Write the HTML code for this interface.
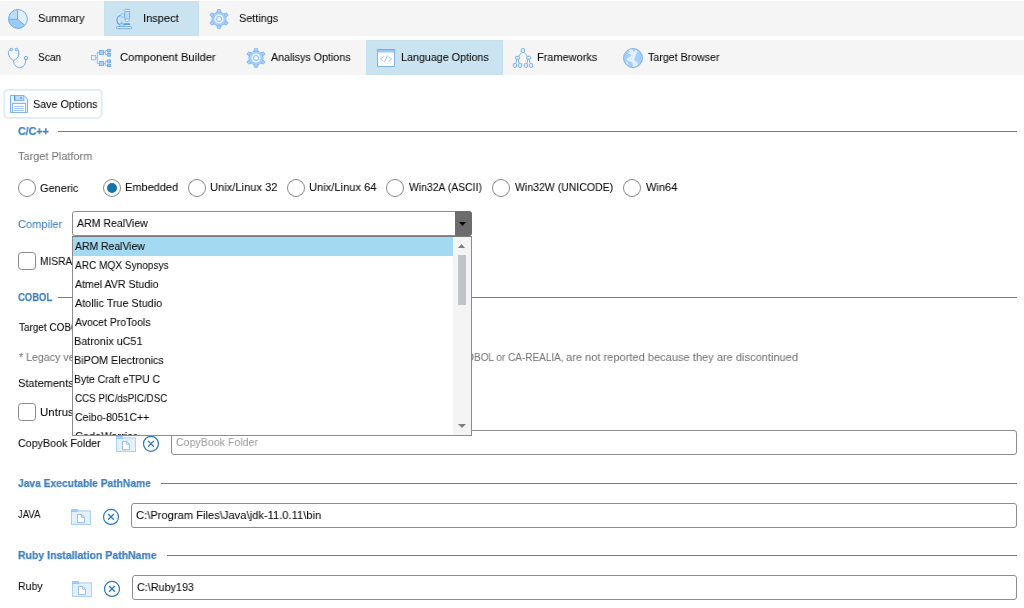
<!DOCTYPE html>
<html lang="en">
<head>
<meta charset="utf-8">
<title>Language Options</title>
<style>
html,body{margin:0;padding:0;}
body{width:1024px;height:608px;overflow:hidden;background:#fff;position:relative;font-family:"Liberation Sans",sans-serif;font-size:11.5px;color:#0a0a0a;}
.abs,.t,svg.i{position:absolute;}
.t{-webkit-text-stroke:.07px currentColor;line-height:1;white-space:nowrap;transform-origin:0 0;display:block;will-change:transform;}
.t.h{font-weight:bold;color:#3f80bd;-webkit-text-stroke:.25px #3f80bd;}
.t.b{color:#3f80bd;}
.t.g{color:#777;}
.t.p{color:#a0a0a0;}
.bar{position:absolute;left:0;width:1024px;background:#f5f5f5;}
.sel{position:absolute;background:#c9e4f0;box-shadow:inset 0 0 0 1px #c4e1ee;}
.hr{position:absolute;height:1px;background:#4a86c2;}
.radio{position:absolute;width:16px;height:16px;border:1px solid #8a8a8a;border-radius:50%;background:#fff;}
.radio.on::after{content:"";position:absolute;left:3px;top:3px;width:10px;height:10px;border-radius:50%;background:#1474a9;}
.chk{position:absolute;width:16px;height:16px;border:1px solid #8a8a8a;border-radius:3.5px;background:#fff;}
.inp{position:absolute;border:1px solid #8c8c8c;border-radius:3px;background:#fff;box-sizing:border-box;}
</style>
</head>
<body>
<!-- top toolbar -->
<div class="bar" style="top:1px;height:35px;"></div>
<div class="sel" style="left:104px;top:1px;width:95px;height:35px;"></div>
<!-- second toolbar -->
<div class="bar" style="top:40px;height:35px;"></div>
<div class="sel" style="left:366px;top:40px;width:137px;height:35px;"></div>
<!-- save button -->
<svg class="i" style="left:0;top:86px;" width="106" height="36" viewBox="0 86 106 36"><rect x="4.15" y="89.95" width="97.500" height="27.900" rx="3.800" fill="#fff" stroke="#deeaf5" stroke-width="1.700"/></svg>
<!-- section rules -->
<div class="hr" style="left:58px;top:131px;width:959px;"></div>
<div class="hr" style="left:58px;top:297px;width:959px;"></div>
<div class="hr" style="left:161px;top:483px;width:856px;"></div>
<div class="hr" style="left:167px;top:555px;width:850px;"></div>
<!-- radios -->
<div class="radio" style="left:17.5px;top:179px;"></div>
<div class="radio on" style="left:103px;top:178.5px;"></div>
<div class="radio" style="left:188px;top:178.5px;"></div>
<div class="radio" style="left:287.25px;top:178.5px;"></div>
<div class="radio" style="left:385.5px;top:178.5px;"></div>
<div class="radio" style="left:491.6px;top:178.5px;"></div>
<div class="radio" style="left:623px;top:178.5px;"></div>
<!-- checkboxes -->
<div class="chk" style="left:18px;top:252px;"></div>
<div class="chk" style="left:18px;top:403px;"></div>
<!-- inputs -->
<div class="inp" style="left:171px;top:430px;width:846px;height:25px;"></div>
<div class="inp" style="left:131px;top:503px;width:886px;height:25px;"></div>
<div class="inp" style="left:132px;top:575px;width:885px;height:25px;"></div>
<!-- combo -->
<div class="inp" style="left:72px;top:211px;width:400px;height:25px;"></div>
<div class="abs" style="left:455px;top:211px;width:17px;height:24.500px;background:#6c6c6c;border-radius:0 3.500px 3.500px 0;"></div>
<svg class="i" style="left:459px;top:222px;" width="7" height="4" viewBox="0 0 7 4"><path d="M0 0h7L3.5 4z" fill="#000"/></svg>
<!-- pie -->
<svg class="i" style="left:8px;top:9px;" width="20" height="20" viewBox="0 0 20 20">
<circle cx="10" cy="10" r="9.4" fill="#e2f0fe"/>
<path d="M9.6 10.1V.6A9.4 9.4 0 0 0 .6 10.3z" fill="#bcdcfb"/>
<path d="M9.6 10.1L.6 10.3A9.4 9.4 0 0 0 16.9 16.3z" fill="#9ccbf8"/>
<circle cx="10" cy="10" r="9.4" fill="none" stroke="#6ea9e6" stroke-width="1"/>
<path d="M9.6.8V10.1M.8 10.3H9.6L16.7 16.2" fill="none" stroke="#6ea9e6" stroke-width="1"/>
</svg>
<!-- microscope -->
<svg class="i" style="left:115px;top:8px;" width="20" height="22" viewBox="115 8 20 22">
<path d="M121 15.300C118.400 15.900 116.500 18.300 116.900 21 c.3 2 1.600 3.300 3.300 4.100" fill="none" stroke="#5597e0" stroke-width="1.100"/>
<path d="M118.800 26.500L121.600 21.500L124.600 26.500z" fill="#b9dbfb" stroke="#7db3ec" stroke-width=".6"/>
<path d="M120.800 24.200l.8-1.500.9 1.500z" fill="#5b9fe3"/>
<rect x="123.500" y="23.200" width="6.500" height="1.700" rx=".5" fill="#5b9fe3"/>
<rect x="120.700" y="13.500" width="4.200" height="4" rx="1.700" fill="#a9d2fa" stroke="#8abcf0" stroke-width=".5"/>
<rect x="121.500" y="14.700" width="2" height="1.200" rx=".6" fill="#e3f0fe"/>
<rect x="125" y="9.400" width="4.300" height="2.600" rx=".8" fill="#fff" stroke="#6aa8e8" stroke-width=".8"/>
<path d="M124.300 9.300H130" stroke="#8abcf0" stroke-width=".5"/>
<rect x="125.200" y="18.600" width="3.900" height="2.800" rx="1" fill="#fff" stroke="#6aa8e8" stroke-width=".8"/>
<rect x="124.700" y="11.500" width="4.900" height="7.600" rx=".9" fill="#b9dbfb" stroke="#6aa8e8" stroke-width=".8"/>
<rect x="116.400" y="26.700" width="15.300" height="2" rx="1" fill="#eef6fe" stroke="#5b9bdf" stroke-width=".8"/>
</svg>
<!-- gear template -->
<svg width="0" height="0" style="position:absolute"><defs>
<g id="gear">
<g fill="#a6cff8" stroke="#7db4ee" stroke-width=".8">
<path id="tooth" d="M-2.100 -6.400L-1.800 -8.100A1.800 1.800 0 0 1 1.800 -8.100L2.100 -6.400z"/>
<use href="#tooth" transform="rotate(60)"/><use href="#tooth" transform="rotate(120)"/><use href="#tooth" transform="rotate(180)"/><use href="#tooth" transform="rotate(240)"/><use href="#tooth" transform="rotate(300)"/>
<circle r="7"/>
</g>
<circle r="6.600" fill="#a6cff8"/>
<circle r="5.100" fill="#e6f2fe" stroke="#8fbff2" stroke-width=".6"/>
<circle r="2.500" fill="#f1f8ff" stroke="#7db4ee" stroke-width=".9"/>
</g>
<g id="folder">
<path d="M.4 1.9H19.6V15.6H.4z" fill="#e3f1fe" stroke="#92c0f0" stroke-width=".8"/>
<path d="M.4.5H6.6V2.6H.4z" fill="#a5d0fa" stroke="#92c0f0" stroke-width=".8"/>
<path d="M6.4 5.4H10.6L13.4 8.2V13.6H6.4z" fill="#fff" stroke="#7fb0e6" stroke-width=".8"/>
<path d="M10.6 5.4V8.2H13.4" fill="none" stroke="#7fb0e6" stroke-width=".8"/>
</g>
<g id="xc">
<circle r="7.500" fill="#fff" stroke="#2b7bb9" stroke-width="1.200"/>
<path d="M-2.900 -2.900L2.900 2.900M2.900 -2.900L-2.900 2.900" fill="none" stroke="#2b7bb9" stroke-width="1.300"/>
</g>
</defs></svg>
<svg class="i" style="left:209px;top:9px;" width="20" height="20" viewBox="-10 -10 20 20"><use href="#gear"/></svg>
<svg class="i" style="left:246px;top:48px;" width="20" height="20" viewBox="-10 -10 20 20"><use href="#gear"/></svg>
<!-- stethoscope -->
<svg class="i" style="left:6px;top:46px;" width="24" height="24" viewBox="6 46 24 24">
<g fill="none" stroke="#6ea8e6" stroke-width="1">
<path d="M10.6 49.7C9 50.2 8.3 51 8.4 52.6c.1 3.4 2 6.200 5 8"/>
<path d="M17.3 49.7C18.500 50 18.700 50.600 18.700 52v3c0 2.400-2.700 4.300-5.300 5.600"/>
<path d="M13.450 60.600c.3 4 2.600 6.900 6.200 6.900 3.400 0 6.000-2.600 6.000-7.400"/>
<circle cx="11.400" cy="49.500" r="1.200" fill="#d9ebfd"/>
<circle cx="16.400" cy="49.500" r="1.200" fill="#d9ebfd"/>
<circle cx="26" cy="58.100" r="1.700" fill="#d9ebfd"/>
</g>
</svg>
<!-- component builder -->
<svg class="i" style="left:90px;top:48px;" width="22" height="20" viewBox="90 48 22 20">
<path d="M95.900 57.600H97.300M97.300 52.500V63.600M97.300 52.500H99M97.300 63.600H99M103.700 52.500H105.300M105.300 50.500V54.700M105.300 50.500H107.100M105.300 54.700H107.100M103.700 63.500H105.300M105.300 61.200V65.300M105.300 61.200H107.100M105.300 65.300H107.100" fill="none" stroke="#8dbff0" stroke-width="1"/>
<rect x="91.400" y="55.500" width="4.300" height="4.300" fill="#e8f3fe" stroke="#7fb5ee" stroke-width=".8"/>
<rect x="99.300" y="50.400" width="4.200" height="4.200" fill="#a3cff8" stroke="#6aa8e8" stroke-width=".8"/>
<rect x="99.300" y="61.400" width="4.200" height="4.200" fill="#a3cff8" stroke="#6aa8e8" stroke-width=".8"/>
<g fill="#8fc3f5" stroke="#6aa8e8" stroke-width=".7">
<rect x="107.400" y="49.300" width="3.300" height="2.700"/>
<rect x="107.400" y="53.300" width="3.300" height="2.900"/>
<rect x="107.400" y="59.900" width="3.300" height="2.700"/>
<rect x="107.400" y="64" width="3.300" height="2.700"/>
</g>
</svg>
<!-- code window -->
<svg class="i" style="left:376px;top:48px;" width="20" height="20" viewBox="376 48 20 20">
<rect x="377.500" y="49.500" width="17" height="17" fill="#fff" stroke="#82b2e6" stroke-width="1"/>
<rect x="378" y="50" width="16" height="2.500" fill="#9bcbfb"/>
<path d="M377 49.500H395" stroke="#74a8e0" stroke-width="1"/>
<path d="M383.500 56.600L380.600 59L383.500 61.400M388.600 56.600L391.500 59L388.600 61.400M387.400 55.400L384.400 62.400" fill="none" stroke="#a4c6ee" stroke-width="1"/>
</svg>
<!-- frameworks -->
<svg class="i" style="left:511px;top:46px;" width="24" height="24" viewBox="511 46 24 24">
<g fill="none" stroke="#74abe6" stroke-width=".9">
<path d="M521.600 52.500L518.800 56M524.400 52.500L527.200 56M516.500 59.300V62L515.200 63.400M518.500 59.300V62L519.800 63.400M527.600 59.300V62L526.300 63.400M529.600 59.300V62L530.900 63.400"/>
<g fill="#d9ebfd">
<rect x="521.200" y="48.400" width="3.400" height="4.200" rx="1.500"/>
<rect x="515.400" y="56.300" width="4.300" height="2.900" rx="1.400"/>
<rect x="526.500" y="56.300" width="4.300" height="2.900" rx="1.400"/>
<rect x="513.300" y="63.300" width="3.300" height="4.200" rx="1.500"/>
<rect x="518.400" y="63.300" width="3.300" height="4.200" rx="1.500"/>
<rect x="524.300" y="63.300" width="3.300" height="4.200" rx="1.500"/>
<rect x="529.400" y="63.300" width="3.300" height="4.200" rx="1.500"/>
</g></g>
</svg>
<!-- globe -->
<svg class="i" style="left:622px;top:47px;" width="22" height="22" viewBox="622 47 22 22">
<circle cx="633" cy="58" r="9.500" fill="#a3cffa"/>
<path d="M628.300 50.100l2.500-1.300 2.200 1.100.2 2.900 2.300-3 1.900 1-.9 2.300-.9 2.800-1.400 4.200 3.200 2.300.5 1.900-2.300 2.300-3.300.500.700-3.300-2.100-2.300-3.200-.500-1.400-1.800 1.900-1.400 3.200-2.300-1.400-1.400-1.900-.2.500-1.600 1.800-.9-1.600-.3z" fill="#e1f0fe"/>
<path d="M625.300 60.600l1.200 2.800 1.900 1.900-.6-2.900-1.300-1z" fill="#e1f0fe"/>
<circle cx="633" cy="58" r="9.500" fill="none" stroke="#74aee9" stroke-width=".9"/>
</svg>
<!-- save -->
<svg class="i" style="left:9px;top:94px;" width="20" height="20" viewBox="9 94 20 20">
<path d="M10.500 95.500H24L27.500 99.200V112.500H10.500z" fill="#e6f2fd" stroke="#7fb0e6" stroke-width="1"/>
<rect x="14.500" y="95.500" width="9.300" height="5" fill="#b9dbfb" stroke="#7fb0e6" stroke-width=".8"/>
<path d="M14.600 95.500V100.500" stroke="#4f8fd8" stroke-width="1.200"/>
<rect x="20.200" y="97" width="1.700" height="2.200" fill="#7fb0e6"/>
<rect x="12.500" y="103.500" width="13" height="9" fill="#fff" stroke="#7fb0e6" stroke-width=".9"/>
<path d="M14.200 106.400H23.800M14.200 108.400H23.800M14.200 110.500H23.800" stroke="#8ebbee" stroke-width=".9"/>
</svg>
<!-- folders + clear buttons -->
<svg class="i" style="left:116px;top:436px;" width="20" height="16" viewBox="0 0 20 16"><use href="#folder"/></svg>
<svg class="i" style="left:71px;top:509px;" width="20" height="16" viewBox="0 0 20 16"><use href="#folder"/></svg>
<svg class="i" style="left:72px;top:581px;" width="20" height="16" viewBox="0 0 20 16"><use href="#folder"/></svg>
<svg class="i" style="left:141px;top:434px;" width="18" height="18" viewBox="0 0 18 18"><use href="#xc" x="9.97" y="9.80"/></svg>
<svg class="i" style="left:102px;top:507px;" width="18" height="18" viewBox="0 0 18 18"><use href="#xc" x="9.00" y="9.90"/></svg>
<svg class="i" style="left:103px;top:579px;" width="18" height="18" viewBox="0 0 18 18"><use href="#xc" x="9.00" y="9.90"/></svg>

<span class="t" style="left:37.51px;top:13px;transform:scaleX(0.9454);">Summary</span>
<span class="t" style="left:143.48px;top:13px;transform:scaleX(0.9602);">Inspect</span>
<span class="t" style="left:238.51px;top:13px;transform:scaleX(0.9430);">Settings</span>
<span class="t" style="left:37.54px;top:52px;transform:scaleX(0.8820);">Scan</span>
<span class="t" style="left:120.43px;top:52px;transform:scaleX(0.9726);">Component Builder</span>
<span class="t" style="left:271.38px;top:52px;transform:scaleX(0.9295);">Analisys Options</span>
<span class="t" style="left:400.62px;top:52px;transform:scaleX(0.9338);">Language Options</span>
<span class="t" style="left:537.35px;top:52px;transform:scaleX(0.9532);">Frameworks</span>
<span class="t" style="left:647.96px;top:52px;transform:scaleX(0.9250);">Target Browser</span>
<span class="t" style="left:33.11px;top:99px;transform:scaleX(0.9339);">Save Options</span>
<span class="t h" style="left:17.56px;top:126px;transform:scaleX(0.9288);">C/C++</span>
<span class="t g" style="left:17.75px;top:151px;transform:scaleX(0.9523);">Target Platform</span>
<span class="t" style="left:39.95px;top:183px;transform:scaleX(0.9521);">Generic</span>
<span class="t" style="left:124.60px;top:182px;transform:scaleX(0.9548);">Embedded</span>
<span class="t" style="left:209.64px;top:182px;transform:scaleX(0.9675);">Unix/Linux 32</span>
<span class="t" style="left:308.89px;top:182px;transform:scaleX(0.9678);">Unix/Linux 64</span>
<span class="t" style="left:408.75px;top:182px;transform:scaleX(0.9055);">Win32A (ASCII)</span>
<span class="t" style="left:514.95px;top:182px;transform:scaleX(0.9149);">Win32W (UNICODE)</span>
<span class="t" style="left:645.65px;top:182px;transform:scaleX(0.9594);">Win64</span>
<span class="t b" style="left:17.94px;top:219px;transform:scaleX(0.9616);">Compiler</span>
<span class="t" style="left:77.48px;top:218px;transform:scaleX(0.9181);">ARM RealView</span>
<span class="t" style="left:39.57px;top:256px;transform:scaleX(0.8842);">MISRA C Compliance</span>
<span class="t h" style="left:18.11px;top:292px;transform:scaleX(0.8231);">COBOL</span>
<span class="t" style="left:18.53px;top:322px;transform:scaleX(0.8638);">Target COBOL Dialect</span>
<span class="t g" style="left:18.58px;top:352px;transform:scaleX(0.9238);">* Legacy versions of COBOL, such as OS/VS</span>
<span class="t g" style="left:458.60px;top:352px;transform:scaleX(0.8685);">COBOL or CA-REALIA,</span>
<span class="t g" style="left:565.53px;top:352px;transform:scaleX(0.9625);">are not reported because they are discontinued</span>
<span class="t" style="left:18.00px;top:378px;transform:scaleX(0.9573);">Statements</span>
<span class="t" style="left:39.52px;top:407px;transform:scaleX(0.9948);">Untrusted Input</span>
<span class="t" style="left:17.96px;top:438px;transform:scaleX(0.9310);">CopyBook Folder</span>
<span class="t p" style="left:175.86px;top:437px;transform:scaleX(0.9231);">CopyBook Folder</span>
<span class="t h" style="left:17.84px;top:478px;transform:scaleX(0.8924);">Java Executable PathName</span>
<span class="t" style="left:17.85px;top:509px;transform:scaleX(0.8264);">JAVA</span>
<span class="t" style="left:135.53px;top:510px;transform:scaleX(0.9714);">C:\Program Files\Java\jdk-11.0.11\bin</span>
<span class="t h" style="left:18.10px;top:550px;transform:scaleX(0.9117);">Ruby Installation PathName</span>
<span class="t" style="left:17.53px;top:581px;transform:scaleX(0.9196);">Ruby</span>
<span class="t" style="left:136.95px;top:582px;transform:scaleX(0.9373);">C:\Ruby193</span>
<!-- dropdown list -->
<div class="abs" style="left:72px;top:236px;width:398px;height:198px;border:1px solid #8c8c8c;border-top-color:#7a7a7a;background:#fff;"></div>
<div class="abs" style="left:73px;top:237px;width:380px;height:18.5px;background:#a3d9f1;"></div>
<div class="abs" style="left:453px;top:237px;width:18px;height:198px;background:#f4f4f4;"></div>
<div class="abs" style="left:458px;top:255px;width:8px;height:49.5px;background:#c2c3c9;"></div>
<svg class="i" style="left:458px;top:243.7px;" width="7" height="4" viewBox="0 0 7 4"><path d="M0 4h7L3.5 0z" fill="#7e7e7e"/></svg>
<svg class="i" style="left:458px;top:424px;" width="8" height="4" viewBox="0 0 8 4"><path d="M0 0h8L4 4z" fill="#7e7e7e"/></svg>
<div class="abs" style="left:73px;top:237px;width:380px;height:198px;overflow:hidden;"><div style="position:absolute;left:-73px;top:-237px;">
<span class="t" style="left:75.18px;top:241px;transform:scaleX(0.9052);">ARM RealView</span>
<span class="t" style="left:75.18px;top:260px;transform:scaleX(0.8769);">ARC MQX Synopsys</span>
<span class="t" style="left:75.18px;top:279px;transform:scaleX(0.9221);">Atmel AVR Studio</span>
<span class="t" style="left:75.18px;top:298px;transform:scaleX(0.9406);">Atollic True Studio</span>
<span class="t" style="left:75.18px;top:317px;transform:scaleX(0.9115);">Avocet ProTools</span>
<span class="t" style="left:74.31px;top:336px;transform:scaleX(0.9402);">Batronix uC51</span>
<span class="t" style="left:74.32px;top:355px;transform:scaleX(0.9365);">BiPOM Electronics</span>
<span class="t" style="left:74.35px;top:374px;transform:scaleX(0.9026);">Byte Craft eTPU C</span>
<span class="t" style="left:74.70px;top:393px;transform:scaleX(0.8494);">CCS PIC/dsPIC/DSC</span>
<span class="t" style="left:74.67px;top:412px;transform:scaleX(0.9145);">Ceibo-8051C++</span>
<span class="t" style="left:74.64px;top:431px;transform:scaleX(0.9549);">CodeWarrior</span>
</div></div>
</body>
</html>
